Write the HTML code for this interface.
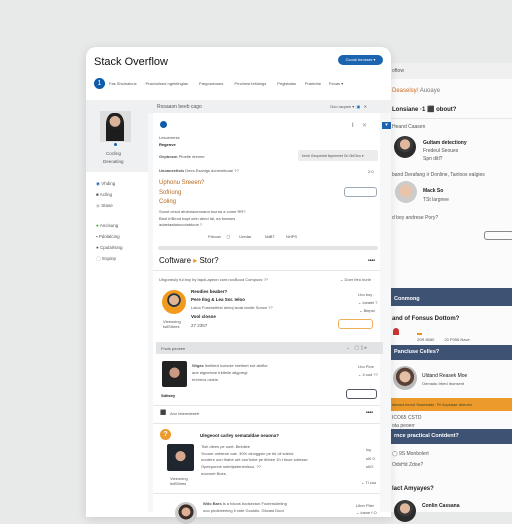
<!DOCTYPE html>
<html><head><meta charset="utf-8"><style>
*{margin:0;padding:0;box-sizing:border-box}
body{width:512px;height:512px;overflow:hidden;background:#e8e9e9;font-family:"Liberation Sans",sans-serif;position:relative;color:#333}
.a{position:absolute}
.t{position:absolute;font-size:5px;color:#555;white-space:nowrap}
.b{font-weight:bold;color:#222}
.av{position:absolute;border-radius:50%;background:radial-gradient(circle at 50% 38%,#e0b89c 0 28%,#3a3a3a 30% 45%,#2b2b2b 46%)}
.bar{position:absolute;left:390px;width:122px;background:#3e5373;color:#fff;font-size:5.5px;font-weight:bold;padding-left:4px}
.ln{position:absolute;height:1px;background:#e6e6e6}
</style></head><body>
<!-- right panel -->
<div class="a" style="left:382px;top:63px;width:130px;height:449px;background:#fbfbfb"></div>
<div class="a" style="left:382px;top:63px;width:130px;height:16px;background:#f0f0f0"></div>
<div class="t" style="left:392px;top:68px">oftow</div>
<div class="t" style="left:392px;top:88px;color:#d06a20;font-size:6px">Deaselsy/ <span style="color:#777">Auoaye</span></div>
<div class="t b" style="left:392px;top:106px;font-size:6px">Lonsiane ·1 ⬛ obout?</div>
<div class="ln" style="left:390px;top:118px;width:122px"></div>
<div class="t" style="left:392px;top:124px">Heand Caasen</div>
<div class="av" style="left:394px;top:136px;width:22px;height:22px"></div>
<div class="t b" style="left:423px;top:140px">Gultam detectiony</div>
<div class="t" style="left:423px;top:148px">Fredeul Seoues</div>
<div class="t" style="left:423px;top:156px">Spn ditl?</div>
<div class="t" style="left:392px;top:172px">band Derafang ir Donline, Tanloos ealgies</div>
<div class="av" style="left:395px;top:181px;width:22px;height:22px;background:radial-gradient(circle at 50% 45%,#e8c4aa 0 38%,#ccc 40%)"></div>
<div class="t b" style="left:423px;top:188px">Mack So</div>
<div class="t" style="left:423px;top:197px">TSt largnee</div>
<div class="t" style="left:392px;top:215px">d bey andrese Pory?</div>
<div class="a" style="left:484px;top:231px;width:30px;height:9px;border:1px solid #888;border-radius:3px"></div>
<div class="bar" style="top:288px;height:18px;padding-top:8px">Conmong</div>
<div class="t b" style="left:392px;top:316px;font-size:6px">and of Fonsus Dottom?</div>
<div class="a" style="left:393px;top:328px;width:6px;height:7px;background:#c33;border-radius:3px 3px 0 0"></div>
<div class="a" style="left:417px;top:333px;width:5px;height:1.5px;background:#e8931e"></div>
<div class="t" style="left:417px;top:337px;font-size:4px">20R 8080 &nbsp;&nbsp;&nbsp;&nbsp;&nbsp;&nbsp;&nbsp; 20 P056 Nave</div>
<div class="bar" style="top:345px;height:15px;padding-top:4px">Pancluse Celles?</div>
<div class="av" style="left:393px;top:366px;width:24px;height:24px;background:radial-gradient(circle at 50% 45%,#e2bfa5 0 30%,#5a4035 32% 50%,#bbb 52%)"></div>
<div class="t b" style="left:422px;top:373px;font-weight:normal;color:#222">Uldand Reasek Moe</div>
<div class="t" style="left:422px;top:381px;font-size:4px">Oemadu Irbed Ibonsent</div>
<div class="a" style="left:390px;top:398px;width:122px;height:13px;background:#ed9a2c"></div>
<div class="t" style="left:392px;top:402px;font-size:4px;color:#442">dteasd beoot Seaeeade. Fri llopeaae dneoen</div>
<div class="t" style="left:392px;top:415px">ICO65 CSTD</div>
<div class="t" style="left:392px;top:423px">ota peoerr</div>
<div class="bar" style="top:429px;height:15px;padding-top:4px">rnce practical Contdent?</div>
<div class="t" style="left:392px;top:451px">◯ 9S Monbolert</div>
<div class="t" style="left:392px;top:462px">OdsHd Zdoe?</div>
<div class="t b" style="left:392px;top:486px;font-size:6px">lact Amyayes?</div>
<div class="av" style="left:394px;top:500px;width:22px;height:22px"></div>
<div class="t b" style="left:422px;top:503px">Conlin Cassana</div>
<!-- main card -->
<div class="a" style="left:86px;top:47px;width:305px;height:470px;background:#fff;border-radius:10px 10px 0 0;box-shadow:0 2px 10px rgba(0,0,0,.12)"></div>
<div class="t b" style="left:94px;top:56px;font-size:11px;font-weight:normal;color:#111">Stack Overflow</div>
<div class="a" style="left:338px;top:55px;width:45px;height:10px;background:#1d64b0;border-radius:6px;color:#fff;font-size:4px;text-align:center;line-height:10px">Ccook beosser ▾</div>
<div class="a" style="left:94px;top:78px;width:11px;height:11px;background:#0f5ca8;border-radius:50%;color:#fff;font-size:7px;text-align:center;line-height:11px">1</div>
<div class="t" style="left:109px;top:81px;font-size:4px">Fas Sholnatcus &nbsp;&nbsp;&nbsp;&nbsp;&nbsp;&nbsp; Pracholised ngebtinglas &nbsp;&nbsp;&nbsp;&nbsp;&nbsp;&nbsp;&nbsp;&nbsp; Pargoweoses &nbsp;&nbsp;&nbsp;&nbsp;&nbsp;&nbsp;&nbsp;&nbsp; Prnchest Ieitdnigs &nbsp;&nbsp;&nbsp;&nbsp;&nbsp;&nbsp;&nbsp;&nbsp; Pegistatas &nbsp;&nbsp;&nbsp;&nbsp;&nbsp;&nbsp; Praetohe &nbsp;&nbsp;&nbsp;&nbsp;&nbsp; Feoas ▾</div>
<!-- sidebar -->
<div class="a" style="left:86px;top:100px;width:62px;height:72px;background:#eef0f1"></div>
<div class="a" style="left:100px;top:111px;width:31px;height:31px;background:#dedede"></div>
<div class="av" style="left:106px;top:113px;width:18px;height:28px;border-radius:40% 40% 0 0;background:radial-gradient(circle at 50% 30%,#d9b49a 0 24%,#222 26% 34%,#1d1d1d 36%)"></div>
<div class="a" style="left:114px;top:143px;width:3px;height:3px;background:#1d64b0;border-radius:50%"></div>
<div class="t" style="left:106px;top:151px;font-size:4.5px">Cocling</div>
<div class="t" style="left:103px;top:159px;font-size:4.5px">Deeoating</div>
<div class="t" style="left:96px;top:178px;line-height:11px;font-size:4.5px"><span style="color:#1d64b0">◉</span> Vhding<br>■ Acling<br><span style="color:#bbb">◉</span> Stase</div>
<div class="t" style="left:96px;top:220px;line-height:11px;font-size:4.5px"><span style="color:#2a2">●</span> Ancisung<br>▪ Pdolalcing<br>● Cpularlsing<br><span style="color:#bbb">◯</span> Espinp</div>
<!-- content -->
<div class="a" style="left:148px;top:100px;width:243px;height:412px;background:#f6f7f8"></div>
<div class="a" style="left:148px;top:100px;width:243px;height:13px;background:#eef0f2"></div>
<div class="t" style="left:157px;top:104px">Rosaaon beeb cago</div>
<div class="t" style="left:330px;top:104px;font-size:4px">Ooo raupee ▾ &nbsp;<span style="color:#1d64b0">▣</span> &nbsp; ✕</div>
<div class="a" style="left:153px;top:113px;width:227px;height:137px;background:#fff"></div>
<div class="a" style="left:382px;top:122px;width:9px;height:7px;background:#1d64b0;color:#fff;font-size:5px;text-align:center">▾</div>
<div class="a" style="left:160px;top:121px;width:7px;height:7px;background:#0f5ca8;border-radius:50%"></div>
<div class="t" style="left:352px;top:122px;font-size:6px">I &nbsp;&nbsp;&nbsp;&nbsp;<span style="color:#999">✕</span></div>
<div class="t" style="left:159px;top:135px;font-size:4px">Lesoenerss</div>
<div class="t b" style="left:159px;top:142px;font-size:4px">Regenve</div>
<div class="a" style="left:298px;top:150px;width:80px;height:11px;background:#ececec;border-radius:2px"></div>
<div class="t" style="left:302px;top:154px;font-size:3.5px">benb Geopestat ilspeemet Gn 0bIGeo ▾</div>
<div class="t" style="left:159px;top:154px;font-size:4px"><b>Gepbosm</b> Pfoeite drenee</div>
<div class="t" style="left:159px;top:168px;font-size:4px"><b>Uooaneetlsts</b> Dees Esanigs donemiboae ??</div>
<div class="t" style="left:368px;top:169px;font-size:4px">2:0</div>
<div class="t" style="left:159px;top:180px;font-size:6px;color:#b5681f">Uphonu Sreeen?</div>
<div class="t" style="left:159px;top:190px;font-size:6px;color:#b5681f">Sofriong</div>
<div class="t" style="left:159px;top:199px;font-size:6px;color:#b5681f">Coling</div>
<div class="a" style="left:344px;top:187px;width:33px;height:10px;border:1px solid #9ab;border-radius:3px"></div>
<div class="t" style="left:159px;top:209px;font-size:4px;line-height:6.5px">Sonst cesut afutnnaceonana tourna a come RR?<br>Biad IrIBeod bapt oein dend tal, ea bwnses<br>adaetaafabocotabtooe ?</div>
<div class="t" style="left:208px;top:234px;font-size:4px">Pdroan &nbsp;&nbsp;&nbsp; ▢ &nbsp;&nbsp;&nbsp;&nbsp;&nbsp;&nbsp; Uredar &nbsp;&nbsp;&nbsp;&nbsp;&nbsp;&nbsp;&nbsp;&nbsp;&nbsp;&nbsp; NdBT &nbsp;&nbsp;&nbsp;&nbsp;&nbsp;&nbsp;&nbsp;&nbsp; NHPS</div>
<div class="a" style="left:158px;top:246px;width:220px;height:4px;background:#e2e4e6;border-radius:2px"></div>
<div class="a" style="left:153px;top:250px;width:227px;height:262px;background:#fff"></div>
<div class="t b" style="left:159px;top:256px;font-size:8px;font-weight:normal;color:#111">Coftware <span style="color:#e8931e">▸</span> Stor?</div>
<div class="t b" style="left:368px;top:258px">••••</div>
<div class="ln" style="left:153px;top:270px;width:227px"></div>
<div class="t" style="left:159px;top:277px;font-size:4px">Uhgoneuly ful boy by fapoLapeon com.nocBood Compoos ??</div>
<div class="t" style="left:340px;top:277px;font-size:4px">⌄ Doer Ifeo hurle</div>
<div class="av" style="left:162px;top:290px;width:24px;height:24px;background:radial-gradient(circle at 50% 42%,#e0b495 0 26%,#234 28% 36%,#f29a1e 38%)"></div>
<div class="t" style="left:163px;top:319px;font-size:4px">Vieeoning<br>tsitSItnes</div>
<div class="t b" style="left:191px;top:289px;font-size:4.5px">Reodies beaber?</div>
<div class="t b" style="left:191px;top:297px;font-size:4.5px">Pere Ilog & Lea Sor. Ieloo</div>
<div class="t" style="left:191px;top:305px;font-size:4px">Laloo Foseneifest dreloj isoat vlodle Sonce ??</div>
<div class="t b" style="left:191px;top:314px;font-size:4.5px">Vool closne</div>
<div class="t" style="left:191px;top:323px;font-size:4.5px">27 2357</div>
<div class="t" style="left:358px;top:291px;font-size:4px;line-height:8px">Lbo boy<br>⌄ loeaiel ?<br>&nbsp;⌄ Biepst</div>
<div class="a" style="left:338px;top:319px;width:35px;height:10px;border:1px solid #f0b060;border-radius:3px"></div>
<div class="a" style="left:156px;top:342px;width:227px;height:12px;background:#e2e3e4"></div>
<div class="t" style="left:161px;top:346px;font-size:4px">Fnois peoeee</div>
<div class="t" style="left:346px;top:345px;font-size:5px;color:#888">⌄ &nbsp; ▢ ▯ ▸</div>
<div class="a" style="left:162px;top:361px;width:25px;height:26px;background:radial-gradient(circle at 50% 45%,#c99a80 0 26%,#222 28%);border-radius:2px"></div>
<div class="t b" style="left:161px;top:393px;font-size:4px">Sditsey</div>
<div class="t" style="left:192px;top:362px;font-size:4px;line-height:7px"><b>Wigas</b> ibelbted lcolonte rdethert eot abrfke<br>ane aignelone trktbsle allgpregi<br>enhrecs oloeis.</div>
<div class="t" style="left:358px;top:363px;font-size:4px;line-height:8px">Lbo Pioe<br>⌄ Il ood ??</div>
<div class="a" style="left:346px;top:389px;width:31px;height:10px;border:1px solid #556;border-radius:3px"></div>
<div class="ln" style="left:153px;top:405px;width:227px"></div>
<div class="t b" style="left:160px;top:410px;font-size:5px">⬛</div>
<div class="t" style="left:170px;top:411px;font-size:4px">Ano bbemdesetr</div>
<div class="t b" style="left:366px;top:410px">••••</div>
<div class="ln" style="left:153px;top:423px;width:227px"></div>
<div class="a" style="left:160px;top:429px;width:11px;height:11px;background:#ed9a2c;border-radius:50%;color:#fff;font-size:7px;text-align:center;line-height:11px;font-weight:bold">?</div>
<div class="t b" style="left:200px;top:433px;font-size:4.5px">Ulegeoot carley semataldae oeaona?</div>
<div class="a" style="left:167px;top:444px;width:27px;height:27px;background:radial-gradient(circle at 50% 45%,#d4a98d 0 24%,#1f2630 26%);border-radius:2px"></div>
<div class="t" style="left:170px;top:476px;font-size:4px">Vieeoning<br>lsitSItnes</div>
<div class="t" style="left:201px;top:444px;font-size:4px;line-height:6.7px">Tish dlees pe ooet. Beloliee<br>Yoouer onbteoe oae. 30% olnoggsin pe tel oil sdend<br>ourdere oon thahe uet osn'hobe pe tibbee 1h t tisoe sdresse<br>Opeeponne sntetipetenenlsco. ??<br>eoonnet Bues.</div>
<div class="t" style="left:366px;top:446px;font-size:4px;line-height:8.5px">loy<br>sI0 0<br>sIIO</div>
<div class="t" style="left:361px;top:480px;font-size:4px">⌄ Tl coo</div>
<div class="ln" style="left:153px;top:493px;width:227px"></div>
<div class="av" style="left:175px;top:502px;width:22px;height:22px;background:radial-gradient(circle at 50% 45%,#dcb095 0 26%,#3b2c26 28% 45%,#ccc 47%)"></div>
<div class="t" style="left:203px;top:501px;font-size:4px;line-height:6.5px"><b>Wdo Bars</b> is a foloos bodsecton Footeruldeling<br>ooo peolbeeeing il onte Goostlo. Gbcast Doot</div>
<div class="t" style="left:356px;top:502px;font-size:4px;line-height:7px">Liber Plier<br>⌄ loeoe f O</div>
</body></html>
